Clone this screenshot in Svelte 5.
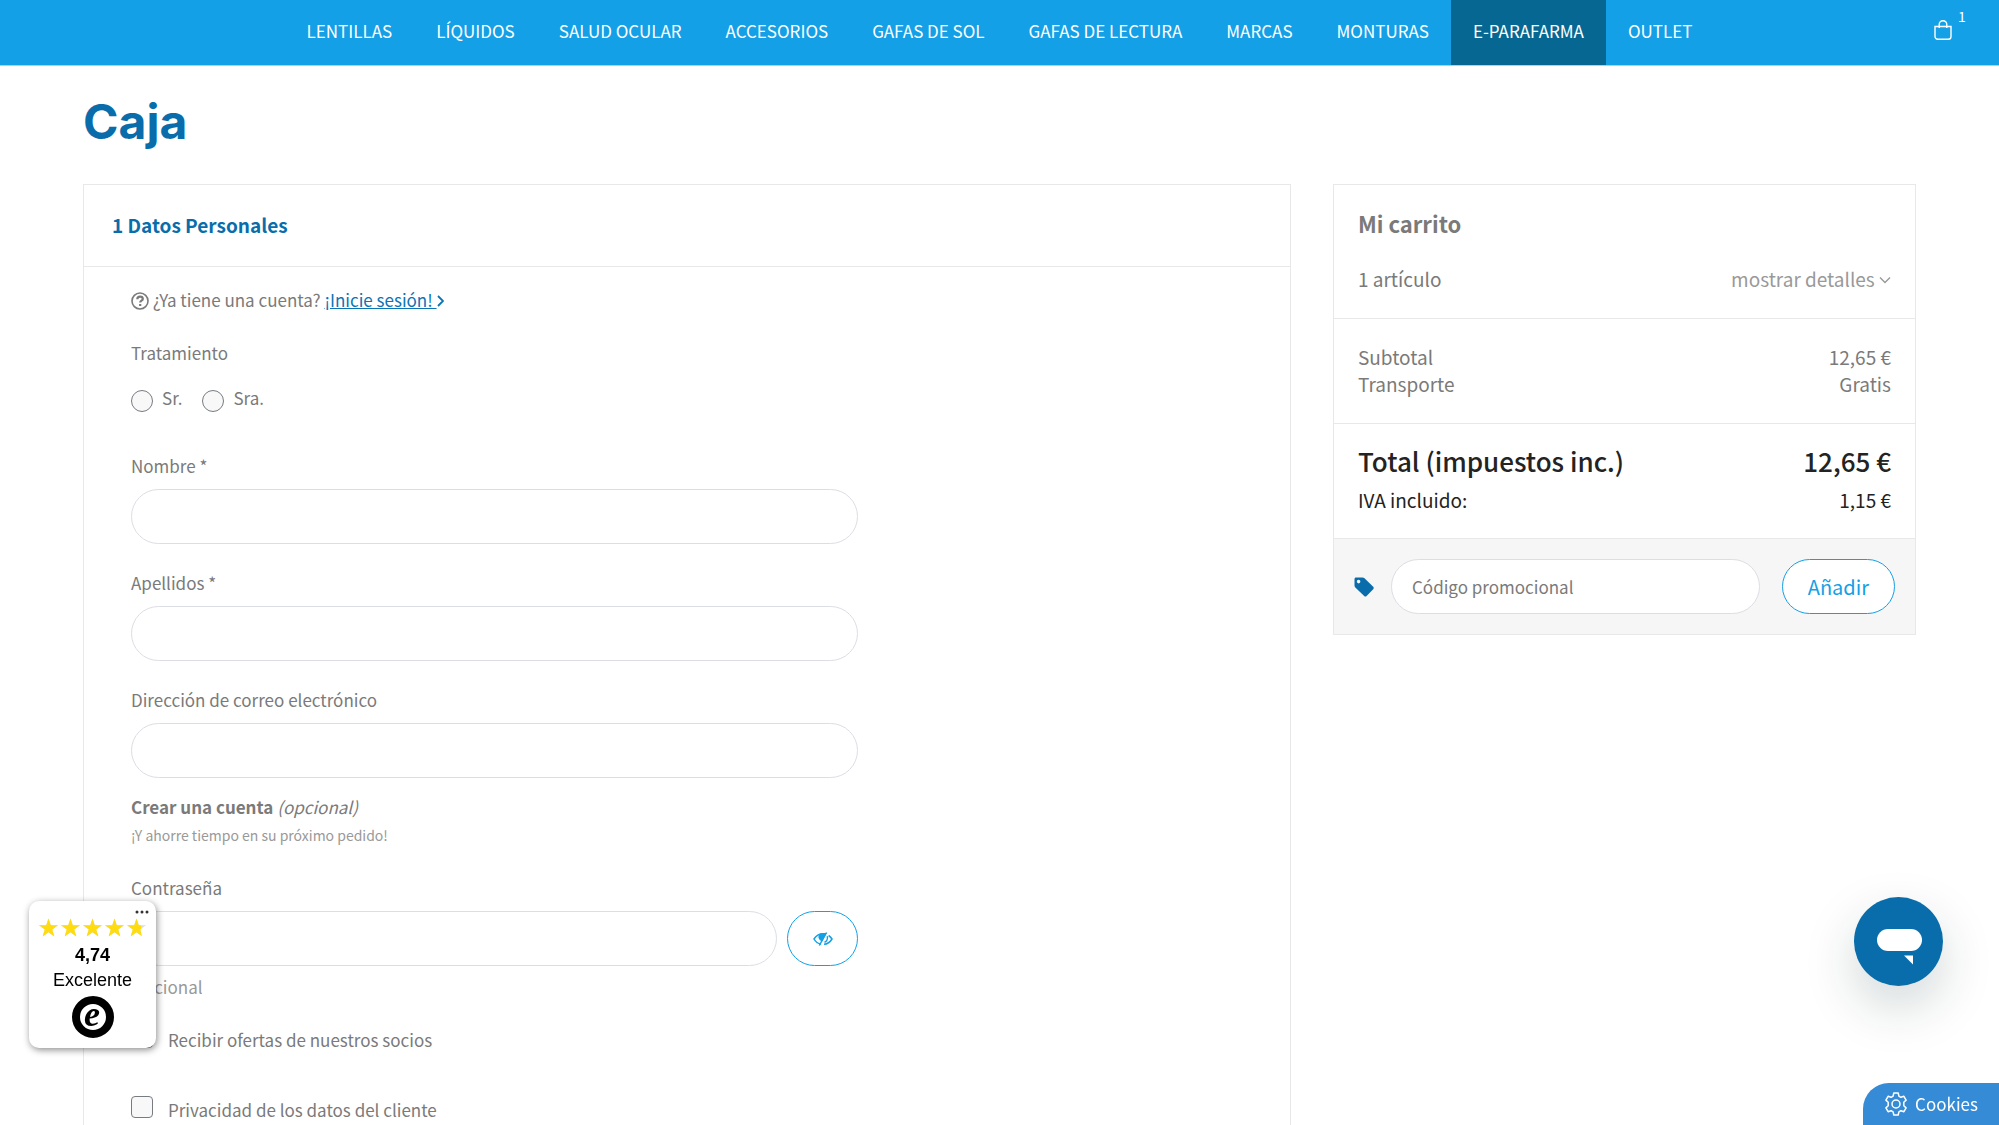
<script lang="ts">
	const menu = [
		'Lentillas', 'Líquidos', 'Salud ocular', 'Accesorios', 'Gafas de sol',
		'Gafas de lectura', 'Marcas', 'Monturas', 'e-Parafarma', 'Outlet'
	];
	const current = 'e-Parafarma';

	const fields = [
		{ id: 'firstname', label: 'Nombre *', type: 'text' },
		{ id: 'lastname', label: 'Apellidos *', type: 'text' },
		{ id: 'email', label: 'Dirección de correo electrónico', type: 'email' }
	];

	const rating = 4.74;
	const star = 'M10 0l2.4 7.2H20l-6.1 4.5 2.3 7.3L10 14.5 3.8 19l2.3-7.3L0 7.2h7.6z';

	let showPassword = $state(false);
	let gender = $state('');
</script>

<header class="topbar">
	<nav class="menu">
		{#each menu as item}
			<a href="#{item}" class:active={item === current}>{item}</a>
		{/each}
	</nav>
	<a class="bag" href="#carrito" aria-label="Carrito">
		<svg viewBox="0 0 18 20" aria-hidden="true">
			<path d="M1 6.5h16v10a2.8 2.8 0 0 1-2.8 2.8H3.8A2.8 2.8 0 0 1 1 16.5zM5.2 8V4.5a3.8 3.8 0 0 1 7.6 0V8" />
		</svg>
		<span class="count">1</span>
	</a>
</header>

<main class="page">
	<h1>Caja</h1>

	<div class="columns">
		<section class="panel steps">
			<h2>1 Datos Personales</h2>
			<form class="form">
				<p class="login">
					<svg class="help" viewBox="0 0 18 18" aria-hidden="true">
						<circle cx="9" cy="9" r="8" />
						<path class="mark" d="M6.3 7.2c0-3.6 5.5-3.3 5.5-.3 0 1.8-2.6 1.7-2.6 3.6M9.2 12v1.9" />
					</svg>
					¿Ya tiene una cuenta?
					<a href="#login">¡Inicie sesión!&nbsp;</a><svg class="next" viewBox="0 0 7 12" aria-hidden="true"><path d="M1 1l5 5-5 5" /></svg>
				</p>

				<fieldset>
					<legend>Tratamiento</legend>
					<label><input type="radio" name="gender" value="1" bind:group={gender} />Sr.</label>
					<label><input type="radio" name="gender" value="2" bind:group={gender} />Sra.</label>
				</fieldset>

				{#each fields as field (field.id)}
					<div class="field">
						<label for={field.id}>{field.label}</label>
						<input id={field.id} class="text" type={field.type} />
					</div>
				{/each}

				<p class="create"><strong>Crear una cuenta</strong> <em>(opcional)</em></p>
				<p class="hint">¡Y ahorre tiempo en su próximo pedido!</p>

				<div class="field">
					<label for="password">Contraseña</label>
					<div class="group">
						<input id="password" class="text" type={showPassword ? 'text' : 'password'} />
						<button
							type="button"
							class="outline eye"
							aria-label="Mostrar contraseña"
							onclick={() => (showPassword = !showPassword)}
						>
							<svg viewBox="0 0 20 14" aria-hidden="true">
								<path d="M8 12.2C4.5 11.5 2.3 9.3 1 7c2-3.3 5-5.3 9-5.3.8 0 1.5.1 2.2.3M15.6 3.5C17.2 4.5 18.3 5.8 19 7c-1.8 3-4.6 5.1-8 5.3" />
								<path class="solid" d="M12.7 1.7L9 8.5C6.5 8 5.500 5 6.8 2.8 8 1.9 10.500 1.5 12.7 1.7z" />
								<path d="M13.5.5L6.3 13.5M14.2 4.3c.8 2.5-.5 5-2.7 5.900" />
							</svg>
						</button>
					</div>
					<span class="note">Opcional</span>
				</div>

				<label class="check"><input type="checkbox" />Recibir ofertas de nuestros socios</label>
				<label class="check"><input type="checkbox" />Privacidad de los datos del cliente</label>
			</form>
		</section>

		<aside class="panel cart">
			<div class="block">
				<h3>Mi carrito</h3>
				<div class="row">
					<span>1 artículo</span>
					<a class="details" href="#detalles">mostrar detalles
						<svg viewBox="0 0 12 8" aria-hidden="true"><path d="M1 1.5l5 5 5-5" /></svg></a>
				</div>
			</div>
			<div class="block sums">
				<div class="row"><span>Subtotal</span><span>12,65 €</span></div>
				<div class="row"><span>Transporte</span><span>Gratis</span></div>
			</div>
			<div class="block totals">
				<div class="row total"><span>Total (impuestos inc.)</span><span>12,65 €</span></div>
				<div class="row"><span>IVA incluido:</span><span>1,15 €</span></div>
			</div>
			<form class="promo">
				<svg viewBox="0 0 20 20" aria-hidden="true">
					<path fill-rule="evenodd" d="M2 .5h6.5c.8 0 1.4.3 2 .8l8.7 8.5c.7.7.7 1.7 0 2.4l-6.6 6.8c-.7.7-1.7.7-2.4 0L1.3 10.5C.8 9.9.5 9.3.5 8.5V2C.5 1.2 1.2.5 2 .5zM4.6 2.8a1.8 1.8 0 1 0 0 3.6 1.8 1.8 0 0 0 0-3.6z" />
				</svg>
				<input class="text" type="text" placeholder="Código promocional" aria-label="Código promocional" />
				<button type="button" class="outline">Añadir</button>
			</form>
		</aside>
	</div>
</main>

<aside class="trust">
	<button type="button" class="more" aria-label="Más">
		<svg viewBox="0 0 14 4" aria-hidden="true">
			<circle cx="2" cy="2" r="1.5" /><circle cx="7" cy="2" r="1.5" /><circle cx="12" cy="2" r="1.5" />
		</svg>
	</button>
	<div class="stars">
		{#each [0, 1, 2, 3, 4] as i}
			<svg viewBox="0 0 20 19" aria-hidden="true">
				<defs>
					<clipPath id="fill{i}"><rect width={20 * Math.min(1, rating - i)} height="19" /></clipPath>
				</defs>
				<path class="off" d={star} />
				<path class="on" d={star} clip-path="url(#fill{i})" />
			</svg>
		{/each}
	</div>
	<strong>4,74</strong>
	<span>Excelente</span>
	<svg class="seal" viewBox="0 0 42 42" aria-hidden="true">
		<circle cx="21" cy="21" r="17" />
		<text x="20" y="30" text-anchor="middle">e</text>
	</svg>
</aside>

<button type="button" class="chat" aria-label="Chat">
	<svg viewBox="0 0 89 89" aria-hidden="true">
		<rect x="23" y="32" width="45" height="22" rx="11" />
		<path d="M50 58.5h9v9z" />
	</svg>
</button>

<button type="button" class="cookies">
	<svg viewBox="0 0 24 24" aria-hidden="true">
		<circle cx="12" cy="12" r="4" />
		<path d="M9.8 1h4.4l.7 3.1 2 1.2 3-1 2.2 3.8-2.3 2.1v3.6l2.3 2.1-2.2 3.8-3-1-2 1.2-.7 3.1H9.8l-.7-3.1-2-1.2-3 1-2.2-3.8 2.3-2.1v-3.6L1.9 8.1l2.2-3.8 3 1 2-1.2z" />
	</svg>
	Cookies
</button>

<style>
	:global(body) {
		margin: 0;
		background: #fff;
		color: #7a7a7a;
		font: 17px/28px 'Noto Sans CJK SC', 'Noto Sans', sans-serif;
	}

	:global(#app) {
		display: flex;
		flex-direction: column;
		min-height: 100vh;
	}

	h1, h2, h3, p { margin: 0; }
	button, input { font: inherit; box-sizing: border-box; }
	svg { fill: none; stroke: currentColor; flex: none; }

	.topbar {
		display: grid;
		grid-template-columns: 1fr auto 1fr;
		height: 65px;
		background: #14a0e6;
		border-bottom: 1px solid #8fdcf7;
	}
	.menu {
		grid-column: 2;
		display: flex;
	}
	.menu a {
		padding: 0 22px;
		line-height: 62px;
		color: #fff;
		text-transform: uppercase;
		text-decoration: none;
		white-space: nowrap;
	}
	.menu a.active { background: #056792; }

	.bag {
		position: relative;
		justify-self: end;
		align-self: start;
		margin: 20px 47px 0 0;
		color: #fff;
	}
	.bag svg {
		display: block;
		width: 18px;
		height: 20px;
		stroke-width: 1.4;
	}
	.count {
		position: absolute;
		left: 24px;
		top: -12px;
		font-size: 14px;
		line-height: 16px;
	}

	.page {
		display: flex;
		flex-direction: column;
		flex: 1;
		padding: 0 83px;
	}
	h1 {
		margin: 25px 0 31px;
		font: 700 48px/62px Inter, sans-serif;
		color: #096dab;
	}

	.columns {
		display: grid;
		grid-template-columns: repeat(12, 1fr);
		gap: 42px;
		flex: 1;
	}
	.panel { border: 1px solid #e8e8e8; }
	.steps {
		grid-column: span 8;
		border-bottom: 0;
	}
	.cart {
		grid-column: span 4;
		align-self: start;
		font-size: 19px;
		line-height: 27px;
	}

	h2 {
		padding: 26px 28px 28px;
		border-bottom: 1px solid #e8e8e8;
		font-size: 19px;
		line-height: 27px;
		color: #096dab;
	}

	.form { padding: 19px 47px 0; }
	.login a { color: #0b74b5; }
	.help {
		width: 18px;
		height: 18px;
		stroke-width: 1.6;
		vertical-align: -3px;
	}
	.mark { stroke-width: 2.2; }
	.next {
		width: 7px;
		height: 12px;
		stroke: #0b74b5;
		stroke-width: 1.8;
	}

	fieldset {
		display: flex;
		gap: 20px;
		margin: 25px 0 40px;
		padding: 0;
		border: 0;
	}
	legend {
		margin-bottom: 17px;
		padding: 0;
	}
	fieldset label {
		display: flex;
		align-items: flex-end;
		gap: 9px;
	}
	[type='radio'],
	[type='checkbox'] {
		appearance: none;
		width: 22px;
		height: 22px;
		margin: 0;
		background: #f8f8f8;
		border: 1px solid #777b82;
		border-radius: 4px;
	}
	[type='radio'] { border-radius: 50%; }
	[type='radio']:checked,
	[type='checkbox']:checked { background: #14a0e6; }

	.field { margin-bottom: 25px; }
	.field label {
		display: block;
		margin-bottom: 9px;
	}
	.text {
		display: block;
		width: 727px;
		max-width: 100%;
		height: 55px;
		padding: 0 20px;
		background: #fff;
		border: 1px solid #dcdee4;
		border-radius: 28px;
		outline: none;
		font-size: 17px;
	}
	.text:focus { border-color: #14a0e6; }
	.text::placeholder { color: #7a7a7a; }

	.create { margin-top: -10px; }
	.hint {
		margin-bottom: 25px;
		font-size: 14px;
		color: #999;
	}
	.group {
		display: flex;
		gap: 10px;
		width: 727px;
		max-width: 100%;
	}
	.outline {
		height: 55px;
		background: #fff;
		border: 1px solid #14a0e6;
		border-radius: 28px;
		color: #14a0e6;
		cursor: pointer;
	}
	.eye {
		display: grid;
		place-items: center;
		flex: none;
		width: 71px;
	}
	.eye svg {
		width: 20px;
		height: 14px;
		stroke-width: 1.5;
	}
	.solid { fill: currentColor; }
	.note {
		display: block;
		margin-top: 7px;
		color: #999;
	}
	.check {
		display: flex;
		align-items: flex-start;
		gap: 15px;
		margin-bottom: 42px;
	}
	.check:last-child { margin-bottom: 0; }

	.block {
		padding: 25px 24px 26px;
		border-bottom: 1px solid #e8e8e8;
	}
	h3 {
		margin-bottom: 28px;
		font-size: 22px;
		line-height: 27px;
	}
	.row {
		display: flex;
		justify-content: space-between;
	}
	.details {
		color: #999;
		text-decoration: none;
	}
	.details svg {
		width: 12px;
		height: 8px;
		stroke-width: 1.4;
		vertical-align: 3px;
	}
	.sums { padding-top: 24px; }
	.totals {
		padding-top: 23px;
		padding-bottom: 25px;
		color: #232323;
	}
	.total {
		margin-bottom: 12px;
		font-size: 26px;
		font-weight: 500;
	}
	.promo {
		display: flex;
		align-items: center;
		padding: 20px;
		background: #f6f6f6;
	}
	.promo svg {
		width: 20px;
		height: 20px;
		margin-right: 17px;
		fill: #096dab;
		stroke: none;
	}
	.promo .text {
		flex: 1;
		min-width: 0;
		margin-right: 22px;
	}
	.promo .outline {
		padding: 0 25px;
		font-size: 20px;
	}

	.trust {
		position: fixed;
		left: 29px;
		bottom: 77px;
		display: flex;
		flex-direction: column;
		align-items: center;
		box-sizing: border-box;
		width: 127px;
		height: 147px;
		padding-top: 17px;
		background: #fff;
		border-radius: 10px;
		box-shadow: 1px 2px 7px rgba(0, 0, 0, 0.45);
		font: 18px/25px 'Liberation Sans', Arial, sans-serif;
		color: #000;
	}
	.more {
		position: absolute;
		top: 9px;
		right: 7px;
		padding: 0;
		background: none;
		border: 0;
		line-height: 0;
	}
	.more svg {
		display: block;
		width: 14px;
		height: 4px;
		fill: #333;
		stroke: none;
	}
	.stars {
		display: flex;
		gap: 3px;
		margin-bottom: 6px;
	}
	.stars svg {
		width: 19px;
		height: 19px;
		stroke: none;
	}
	.off { fill: #ddd; }
	.on { fill: #ffdc0f; }
	.seal {
		width: 42px;
		height: 42px;
		margin-top: 3px;
		overflow: visible;
		stroke-width: 8;
	}
	.seal text {
		fill: #000;
		stroke: none;
		font: italic bold 36px 'Liberation Serif', serif;
	}

	.chat {
		position: fixed;
		right: 56px;
		bottom: 139px;
		width: 89px;
		height: 89px;
		padding: 0;
		background: #096dab;
		border: 0;
		border-radius: 50%;
		box-shadow: 0 21px 52px rgba(0, 40, 40, 0.18);
		line-height: 0;
	}
	.chat svg {
		width: 89px;
		height: 89px;
		fill: #fff;
		stroke: none;
	}

	.cookies {
		position: fixed;
		right: 0;
		bottom: 0;
		display: flex;
		align-items: center;
		gap: 7px;
		height: 42px;
		padding: 0 21px;
		background: #368bd6;
		border: 0;
		border-radius: 26px 0 0 0;
		color: #fff;
	}
	.cookies svg {
		width: 24px;
		height: 24px;
		stroke-width: 1.5;
		stroke-linejoin: round;
	}
</style>
